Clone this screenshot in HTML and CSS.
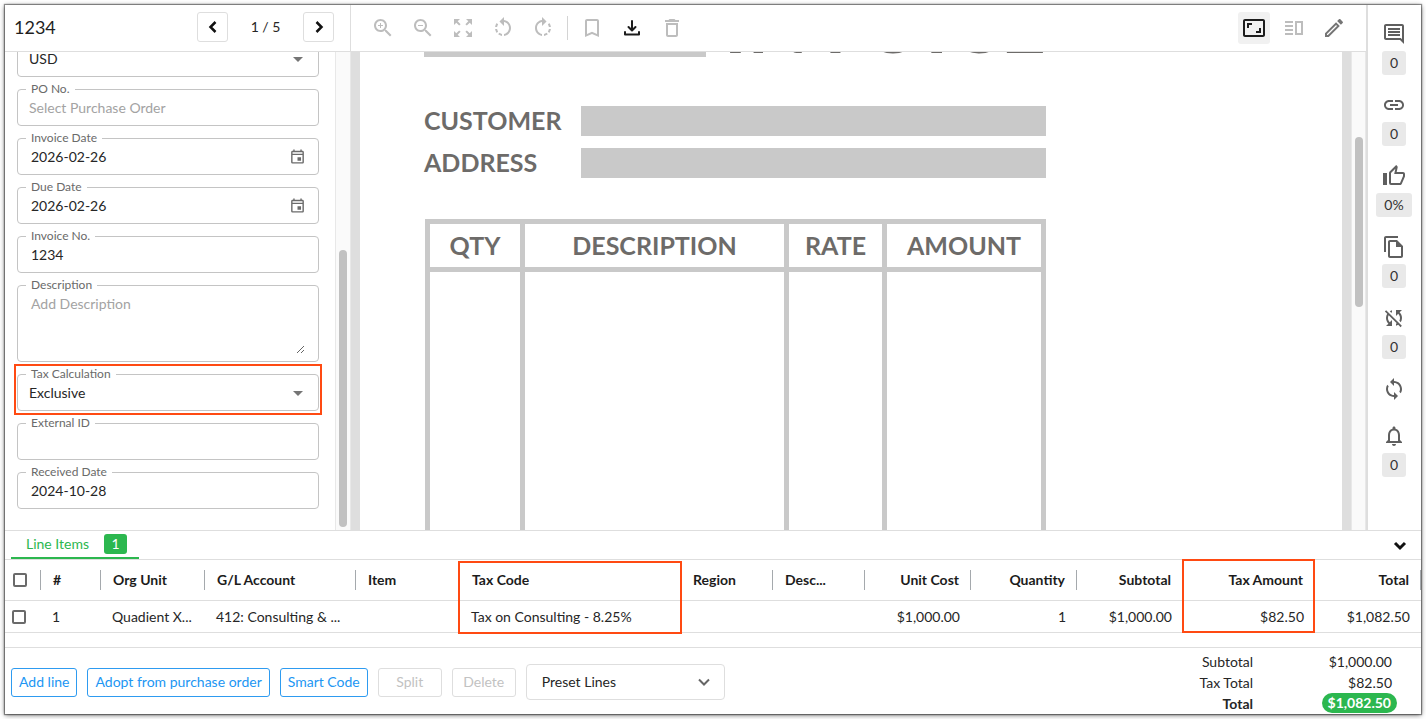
FILE: index.html
```html
<!DOCTYPE html>
<html lang="en">
<head>
<meta charset="utf-8">
<title>Invoice 1234</title>
<link rel="stylesheet" href="styles.css">
</head>
<body>
<div class="app">
  <div class="workspace">
    <section class="panel">
      <header class="bar panel-bar">
        <h1 class="title">1234</h1>
        <button class="step" aria-label="Previous"><svg class="icon" viewBox="0 0 24 24"><path class="chevron" d="M15 6l-6 6 6 6"/></svg></button>
        <span class="count">1 / 5</span>
        <button class="step" aria-label="Next"><svg class="icon" viewBox="0 0 24 24"><path class="chevron" d="M9 6l6 6-6 6"/></svg></button>
      </header>
      <div class="panel-body">
        <form class="fields">
          <div class="field">
            <select aria-label="Currency" class="tight"><option>USD</option></select>
            <svg class="icon drop" viewBox="0 0 24 24"><path d="M7 10l5 5 5-5z"/></svg>
          </div>
          <div class="field">
            <label for="po">PO No.</label>
            <input id="po" class="tight" type="text" placeholder="Select Purchase Order">
          </div>
          <div class="field">
            <label for="invdate">Invoice Date</label>
            <input id="invdate" type="text" value="2026-02-26">
            <svg class="calendar" viewBox="0 0 24 24"><path d="M19 4h-1V2h-2v2H8V2H6v2H5c-1.110 0-1.990.9-1.990 2L3 20a2 2 0 0 0 2 2h14c1.100 0 2-.9 2-2V6c0-1.100-.9-2-2-2zm0 16H5V10h14v10zM5 8V6h14v2H5zm7 5h5v5h-5v-5z"/></svg>
          </div>
          <div class="field">
            <label for="duedate">Due Date</label>
            <input id="duedate" type="text" value="2026-02-26">
            <svg class="calendar" viewBox="0 0 24 24"><path d="M19 4h-1V2h-2v2H8V2H6v2H5c-1.110 0-1.990.9-1.990 2L3 20a2 2 0 0 0 2 2h14c1.100 0 2-.9 2-2V6c0-1.100-.9-2-2-2zm0 16H5V10h14v10zM5 8V6h14v2H5zm7 5h5v5h-5v-5z"/></svg>
          </div>
          <div class="field">
            <label for="invno">Invoice No.</label>
            <input id="invno" type="text" value="1234">
          </div>
          <div class="field tall">
            <label for="desc">Description</label>
            <textarea id="desc" placeholder="Add Description"></textarea>
            <svg class="grip" viewBox="0 0 10 10"><path d="M1 8L8 1M5 8l3-3"/></svg>
          </div>
          <div class="field">
            <label for="tax">Tax Calculation</label>
            <select id="tax" class="tight"><option>Exclusive</option></select>
            <svg class="icon drop" viewBox="0 0 24 24"><path d="M7 10l5 5 5-5z"/></svg>
            <span class="mark mark-field"></span>
          </div>
          <div class="field">
            <label for="extid">External ID</label>
            <input id="extid" type="text">
          </div>
          <div class="field">
            <label for="received">Received Date</label>
            <input id="received" type="text" value="2024-10-28">
          </div>
        </form>
        <div class="track track-wide"><div class="thumb thumb-low"></div></div>
      </div>
    </section>

    <section class="viewer">
      <header class="bar viewer-bar">
        <button class="tool" aria-label="Zoom in"><svg class="icon" viewBox="0 0 24 24"><path d="M15.500 14h-.79l-.28-.27C15.410 12.590 16 11.110 16 9.500 16 5.910 13.090 3 9.500 3S3 5.910 3 9.500 5.910 16 9.500 16c1.610 0 3.090-.59 4.230-1.570l.27.28v.79l5 4.990L20.490 19l-4.990-5zm-6 0C7.010 14 5 11.990 5 9.500S7.010 5 9.500 5 14 7.010 14 9.500 11.990 14 9.500 14z"/><path d="M12 10h-2v2H9v-2H7V9h2V7h1v2h2v1z"/></svg></button>
        <button class="tool" aria-label="Zoom out"><svg class="icon" viewBox="0 0 24 24"><path d="M15.500 14h-.79l-.28-.27C15.410 12.590 16 11.110 16 9.500 16 5.910 13.090 3 9.500 3S3 5.910 3 9.500 5.910 16 9.500 16c1.610 0 3.090-.59 4.230-1.570l.27.28v.79l5 4.990L20.490 19l-4.990-5zm-6 0C7.010 14 5 11.990 5 9.500S7.010 5 9.500 5 14 7.010 14 9.500 11.990 14 9.500 14z"/><path d="M7 9h5v1H7z"/></svg></button>
        <button class="tool" aria-label="Fit"><svg class="icon" viewBox="0 0 24 24"><path d="M15 3l2.300 2.300-2.890 2.870 1.420 1.420L18.700 6.700 21 9V3zM3 9l2.300-2.300 2.870 2.890 1.420-1.420L6.700 5.300 9 3H3zm6 12l-2.300-2.300 2.890-2.870-1.420-1.420L5.300 17.300 3 15v6zm12-6l-2.300 2.300-2.870-2.890-1.420 1.420 2.890 2.870L15 21h6z"/></svg></button>
        <button class="tool" aria-label="Rotate left"><svg class="icon" viewBox="0 0 24 24"><path d="M7.110 8.530L5.700 7.110C4.800 8.270 4.240 9.610 4.070 11h2.020c.14-.87.49-1.720 1.020-2.470zM6.090 13H4.070c.17 1.390.72 2.730 1.620 3.890l1.410-1.420c-.52-.75-.87-1.590-1.010-2.470zm1.010 5.320c1.160.9 2.510 1.440 3.900 1.610V17.900c-.87-.15-1.710-.49-2.460-1.030L7.100 18.320zM13 4.070V1L8.450 5.550 13 10V6.090c2.840.48 5 2.940 5 5.910s-2.160 5.430-5 5.910v2.020c3.950-.49 7-3.850 7-7.930s-3.050-7.440-7-7.930z"/></svg></button>
        <button class="tool" aria-label="Rotate right"><svg class="icon" viewBox="0 0 24 24"><path transform="translate(24 0) scale(-1 1)" d="M7.110 8.530L5.700 7.110C4.800 8.270 4.240 9.610 4.070 11h2.020c.14-.87.49-1.720 1.020-2.470zM6.090 13H4.070c.17 1.390.72 2.730 1.620 3.890l1.410-1.420c-.52-.75-.87-1.590-1.010-2.470zm1.010 5.320c1.160.9 2.510 1.440 3.900 1.610V17.900c-.87-.15-1.710-.49-2.460-1.030L7.100 18.320zM13 4.070V1L8.450 5.550 13 10V6.090c2.840.48 5 2.940 5 5.910s-2.160 5.430-5 5.910v2.020c3.950-.49 7-3.850 7-7.930s-3.050-7.440-7-7.930z"/></svg></button>
        <span class="rule"></span>
        <button class="tool" aria-label="Bookmark"><svg class="icon" viewBox="0 0 24 24"><path d="M17 3H7c-1.100 0-1.990.9-1.990 2L5 21l7-3 7 3V5c0-1.100-.9-2-2-2zm0 15l-5-2.180L7 18V5h10v13z"/></svg></button>
        <button class="tool strong" aria-label="Download"><svg class="icon" viewBox="0 0 24 24"><path class="line" d="M12 5v9M8.500 11l3.500 3.500 3.500-3.500M5 16v2.500h14V16"/></svg></button>
        <button class="tool" aria-label="Delete page"><svg class="icon" viewBox="0 0 24 24"><path d="M6 19c0 1.100.9 2 2 2h8c1.100 0 2-.9 2-2V7H6v12zM8 9h8v10H8V9zm7.500-5l-1-1h-5l-1 1H5v2h14V4z"/></svg></button>
        <span class="spacer"></span>
        <button class="tool strong active" aria-label="Wide view"><svg class="icon" viewBox="0 0 24 24"><path d="M19 12h-2v3h-3v2h5v-5zM7 9h3V7H5v5h2V9zm14-6H3c-1.100 0-2 .9-2 2v14c0 1.100.9 2 2 2h18c1.100 0 2-.9 2-2V5c0-1.100-.9-2-2-2zm0 16.010H3V4.990h18v14.020z"/></svg></button>
        <button class="tool" aria-label="Split view"><svg class="icon" viewBox="0 0 24 24"><path d="M3 15h8v-2H3v2zm0 4h8v-2H3v2zm0-8h8V9H3v2zm0-6v2h8V5H3zm10 0h8v14h-8V5zm2 2v10h4V7h-4z"/></svg></button>
        <button class="tool medium" aria-label="Edit"><svg class="icon" viewBox="0 0 24 24"><path d="M14.060 9L15 9.940 5.920 19H5v-.92L14.060 9M17.660 3c-.25 0-.51.1-.7.29l-1.830 1.830 3.750 3.750 1.830-1.830c.39-.39.39-1.040 0-1.410l-2.340-2.340c-.2-.2-.45-.29-.71-.29M14.060 6.190L3 17.250V21h3.750L17.810 9.940 14.060 6.190z"/></svg></button>
      </header>
      <div class="viewer-body">
        <div class="page">
          <div class="invoice">
            <div class="invoice-head"><div class="blank-short"></div><div class="invoice-title">INVOICE</div></div>
            <div class="party">
              <span>CUSTOMER</span><div class="blank"></div>
              <span>ADDRESS</span><div class="blank"></div>
            </div>
            <table class="sheet">
              <colgroup><col class="s-qty"><col><col class="s-rate"><col class="s-amount"></colgroup>
              <thead><tr><th>QTY</th><th>DESCRIPTION</th><th>RATE</th><th>AMOUNT</th></tr></thead>
              <tbody><tr><td></td><td></td><td></td><td></td></tr></tbody>
            </table>
          </div>
        </div>
        <div class="track"><div class="thumb thumb-mid"></div></div>
      </div>
    </section>

    <nav class="rail">
      <button class="rail-item" aria-label="Comments"><svg class="icon" viewBox="0 0 24 24"><path d="M21.990 4c0-1.100-.89-2-1.990-2H4c-1.100 0-2 .9-2 2v12c0 1.100.9 2 2 2h14l4 4-.01-18zM20 4v13.170L18.830 16H4V4h16zM6 12h12v2H6zm0-3h12v2H6zm0-3h12v2H6z"/></svg><span class="chip">0</span></button>
      <button class="rail-item" aria-label="Links"><svg class="icon" viewBox="0 0 24 24"><path d="M3.900 12c0-1.710 1.390-3.100 3.100-3.100h4V7H7c-2.760 0-5 2.240-5 5s2.240 5 5 5h4v-1.900H7c-1.710 0-3.100-1.390-3.100-3.100zM8 13h8v-2H8v2zm9-6h-4v1.900h4c1.710 0 3.100 1.390 3.100 3.100s-1.390 3.100-3.100 3.100h-4V17h4c2.760 0 5-2.240 5-5s-2.240-5-5-5z"/></svg><span class="chip">0</span></button>
      <button class="rail-item" aria-label="Approvals"><svg class="icon" viewBox="0 0 24 24"><path d="M5 9v12H1V9h4m4 12a2 2 0 0 1-2-2V9c0-.55.22-1.050.59-1.410L14.170 1l1.060 1.060c.27.27.44.64.44 1.050l-.03.32L14.690 8H21c1.110 0 2 .9 2 2v2c0 .26-.05.5-.14.73l-3.020 7.050C19.540 20.500 18.830 21 18 21H9m0-2h9.030L21 12v-2h-8.790l1.130-5.320L9 9.030V19z"/></svg><span class="chip">0%</span></button>
      <button class="rail-item" aria-label="Duplicates"><svg class="icon" viewBox="0 0 24 24"><path d="M16 1H4c-1.100 0-2 .9-2 2v14h2V3h12V1zm-1 4H8c-1.100 0-1.990.9-1.990 2L6 21c0 1.100.89 2 1.990 2H19c1.100 0 2-.9 2-2V11l-6-6zM8 21V7h6v5h5v9H8z"/></svg><span class="chip">0</span></button>
      <button class="rail-item" aria-label="Sync errors"><svg class="icon" viewBox="0 0 24 24"><path d="M10 6.350V4.260c-.8.21-1.550.54-2.230.96l1.460 1.460c.25-.12.5-.24.77-.33zm-7.140-.94l2.360 2.360C4.450 8.990 4 10.440 4 12c0 2.210.91 4.200 2.360 5.640L4 20h6v-6l-2.240 2.240C6.680 15.150 6 13.660 6 12c0-1 .25-1.940.68-2.770l8.080 8.080c-.25.13-.5.25-.77.34v2.090c.8-.21 1.550-.54 2.230-.96l2.360 2.360 1.270-1.270L4.140 4.140 2.860 5.410zM20 4h-6v6l2.240-2.240C17.320 8.850 18 10.340 18 12c0 1-.25 1.940-.68 2.770l1.460 1.460C19.550 15.010 20 13.560 20 12c0-2.210-.91-4.200-2.360-5.640L20 4z"/></svg><span class="chip">0</span></button>
      <button class="rail-item" aria-label="Sync"><svg class="icon" viewBox="0 0 24 24"><path d="M12 4V1L8 5l4 4V6c3.310 0 6 2.690 6 6 0 1.010-.25 1.970-.7 2.800l1.460 1.460C19.540 15.030 20 13.570 20 12c0-4.420-3.580-8-8-8zm0 14c-3.310 0-6-2.690-6-6 0-1.010.25-1.970.7-2.800L5.240 7.740C4.460 8.970 4 10.430 4 12c0 4.420 3.580 8 8 8v3l4-4-4-4v3z"/></svg></button>
      <button class="rail-item" aria-label="Notifications"><svg class="icon" viewBox="0 0 24 24"><path d="M12 22c1.100 0 2-.9 2-2h-4c0 1.100.9 2 2 2zm6-6v-5c0-3.070-1.630-5.640-4.500-6.320V4c0-.83-.67-1.500-1.500-1.500s-1.500.67-1.500 1.500v.68C7.640 5.360 6 7.920 6 11v5l-2 2v1h16v-1l-2-2zm-2 1H8v-6c0-2.480 1.510-4.500 4-4.500s4 2.020 4 4.500v6z"/></svg><span class="chip">0</span></button>
    </nav>
  </div>

  <section class="lines">
    <div class="tabs">
      <button class="tab">Line Items<span class="tab-count">1</span></button>
      <span class="spacer"></span>
      <button class="collapse" aria-label="Collapse"><svg class="icon" viewBox="0 0 24 24"><path class="chevron" d="M7 10l5 5 5-5"/></svg></button>
    </div>
    <table class="grid">
      <colgroup>
        <col class="c-check"><col class="c-num"><col class="c-name"><col class="c-account"><col class="c-name"><col>
        <col class="c-short"><col class="c-short"><col class="c-money"><col class="c-money"><col class="c-money"><col class="c-tax"><col class="c-money">
      </colgroup>
      <thead>
        <tr>
          <th class="check"><input type="checkbox" aria-label="Select all lines"></th>
          <th>#</th><th>Org Unit</th><th>G/L Account</th><th class="bare">Item</th>
          <th class="bare">Tax Code<span class="mark mark-code"></span></th>
          <th>Region</th><th>Desc...</th>
          <th class="num">Unit Cost</th><th class="num">Quantity</th><th class="num bare">Subtotal</th>
          <th class="num bare">Tax Amount<span class="mark mark-amount"></span></th>
          <th class="num">Total</th>
        </tr>
      </thead>
      <tbody>
        <tr>
          <td class="check"><input type="checkbox" aria-label="Select line 1"></td>
          <td>1</td><td>Quadient X...</td><td>412: Consulting &amp; ...</td><td></td>
          <td>Tax on Consulting - 8.25%</td><td></td><td></td>
          <td class="num">$1,000.00</td><td class="num">1</td><td class="num">$1,000.00</td>
          <td class="num">$82.50</td><td class="num">$1,082.50</td>
        </tr>
      </tbody>
    </table>
    <footer class="actions">
      <button class="btn">Add line</button>
      <button class="btn">Adopt from purchase order</button>
      <button class="btn">Smart Code</button>
      <button class="btn" disabled>Split</button>
      <button class="btn" disabled>Delete</button>
      <div class="preset">
        <select aria-label="Preset lines"><option>Preset Lines</option></select>
        <svg class="icon preset-arrow" viewBox="0 0 24 24"><path class="chevron" d="M7 9.500l5 5 5-5"/></svg>
      </div>
      <span class="spacer"></span>
      <dl class="totals">
        <dt>Subtotal</dt><dd>$1,000.00</dd>
        <dt>Tax Total</dt><dd>$82.50</dd>
        <dt class="sum">Total</dt><dd class="sum"><span class="pill">$1,082.50</span></dd>
      </dl>
    </footer>
  </section>
</div>
</body>
</html>
```

FILE: styles.css
```css
* { box-sizing: border-box; }

body {
  margin: 0;
  min-height: 100vh;
  display: flex;
  padding: 5px 5px 5px;
  background: #fff;
  color: #262626;
  font-family: Lato, "Liberation Sans", sans-serif;
  font-size: 15px;
  line-height: 20px;
}

button, input, select, textarea { font: inherit; color: inherit; margin: 0; }
button { background: none; border: 0; padding: 0; }

.app {
  flex: 1;
  min-width: 0;
  display: flex;
  flex-direction: column;
  background: #fff;
  box-shadow: 0 0 1px 1px rgba(0, 0, 0, .4), 0 1px 5px rgba(0, 0, 0, .6);
}

.icon { width: 24px; height: 24px; display: block; fill: currentColor; }
.chevron, .line { fill: none; stroke: currentColor; stroke-width: 2; }
.chevron { stroke-width: 3; }
.line { stroke-linecap: round; stroke-linejoin: round; }
.spacer { flex: 1; }

.workspace { flex: 1; display: flex; min-height: 0; }

.bar {
  height: 47px;
  flex: none;
  display: flex;
  align-items: center;
  border-bottom: 1px solid #dedede;
}

/* Left panel */
.panel { width: 346px; flex: none; display: flex; flex-direction: column; }
.panel-bar { padding: 0 16px 2px 9px; border-right: 1px solid #dedede; }
.title { flex: 1; margin: 0; font-size: 18px; font-weight: 400; color: #1f1f1f; }
.step {
  width: 31px;
  height: 30px;
  display: flex;
  align-items: center;
  justify-content: center;
  border: 1px solid #dedede;
  border-radius: 3px;
  color: #111;
}
.step .icon { width: 20px; height: 20px; flex: none; }
.count { width: 75px; text-align: center; font-size: 14px; }

.panel-body { flex: 1 1 0; min-height: 0; overflow: hidden; display: flex; }
.fields {
  flex: 1;
  display: flex;
  flex-direction: column;
  justify-content: flex-end;
  gap: 12px;
  padding: 0 16px 21px 12px;
}
.field {
  position: relative;
  flex: none;
  height: 37px;
  display: flex;
  border: 1px solid #c4c4c4;
  border-radius: 4px;
}
.field.tall { height: 77px; }
.field label {
  position: absolute;
  left: 8px;
  top: -11px;
  padding: 0 5px;
  background: #fff;
  color: #6a6a6a;
  font-size: 12px;
}
.field input, .field select, .field textarea {
  flex: 1;
  min-width: 0;
  border: 0;
  outline: 0;
  background: transparent;
  padding: 2px 13px 0;
  font-size: 14px;
  appearance: none;
}
.field textarea { padding: 8px 13px; resize: none; }
.field .tight { padding-left: 11px; }
.field ::placeholder { color: #a3a3a3; opacity: 1; }
.drop { position: absolute; right: 8px; top: 6px; color: #757575; pointer-events: none; }
.calendar { width: 17px; height: 17px; flex: none; align-self: center; margin-right: 12px; fill: #6b6b6b; }
.grip { position: absolute; right: 12px; bottom: 6px; width: 10px; height: 10px; fill: none; stroke: #666; }

.track { width: 15px; flex: none; padding: 0 3px; background: #fafafa; border: solid #e8e8e8; border-width: 0 1px; }
.track-wide { width: 16px; }
.thumb { width: 8px; border-radius: 4px; background: #c1c1c1; }
.thumb-low { height: 277px; margin-top: 198px; }
.thumb-mid { height: 170px; margin-top: 85px; }

.mark { position: absolute; z-index: 1; border: 2px solid #ff4a12; pointer-events: none; }
.mark-field { inset: -11px -4px -5px -4px; }

/* Document viewer */
.viewer { flex: 1; min-width: 0; display: flex; flex-direction: column; }
.viewer-bar { padding: 0 12px; }
.tool { width: 40px; height: 32px; display: flex; align-items: center; justify-content: center; color: #bdbdbd; }
.strong { color: #1c1c1c; }
.medium { color: #757575; }
.active { width: 32px; margin: 0 4px; background: #f1f1f1; border-radius: 3px; }
.rule { width: 1px; height: 24px; margin: 0 4px; background: #d4d4d4; }
.viewer-body { flex: 1 1 0; min-height: 0; display: flex; overflow: hidden; background: #dedede; padding-left: 9px; }
.page { flex: 1; min-width: 0; margin-right: 9px; padding-left: 64px; background: #fff; overflow: hidden; }
.invoice { width: 622px; color: #6d6b69; font-weight: 700; font-size: 25px; }
.invoice-head { height: 10px; display: flex; align-items: flex-end; justify-content: space-between; }
.blank-short { width: 282px; height: 30px; margin-bottom: 5px; background: #c9c9c9; }
.invoice-title { font-size: 79px; line-height: 79px; }
.party { display: grid; grid-template-columns: 157px 1fr; gap: 12px 0; margin-top: 44px; line-height: 28px; }
.blank { height: 30px; background: #c9c9c9; }
.sheet {
  width: 621px;
  margin: 41px 0 0 1px;
  table-layout: fixed;
  border-collapse: separate;
  border-spacing: 5px;
  background: #c9c9c9;
}
.sheet th, .sheet td { padding: 0; background: #fff; }
.sheet th { height: 43px; padding-bottom: 2px; line-height: 30px; }
.sheet td { height: 400px; }
.s-qty { width: 90px; }
.s-rate { width: 93px; }
.s-amount { width: 154px; }

/* Right rail */
.rail {
  width: 55px;
  flex: none;
  display: flex;
  flex-direction: column;
  align-items: center;
  gap: 18px;
  padding: 17px 1px 0 0;
  border-left: 2px solid #dedede;
  color: #5f5f5f;
}
.rail-item { display: flex; flex-direction: column; align-items: center; }
.rail-item .icon { margin-bottom: 5px; }
.chip {
  min-width: 24px;
  height: 24px;
  padding: 0 8px;
  border-radius: 3px;
  background: #e9e9e9;
  color: #333;
  font-size: 14px;
  line-height: 24px;
}

/* Line items */
.lines { border-top: 1px solid #dedede; }
.tabs { display: flex; height: 29px; padding: 0 9px 0 6px; border-bottom: 1px solid #dedede; }
.tab {
  display: flex;
  align-items: center;
  gap: 15px;
  height: 28px;
  padding: 0 12px 0 15px;
  border-bottom: 2px solid #2cb74f;
  color: #2cb74f;
  font-size: 14px;
}
.tab-count { width: 23px; height: 20px; border-radius: 3px; background: #2cb74f; color: #fff; }
.collapse { color: #111; align-self: center; }

.grid { width: 100%; table-layout: fixed; border-collapse: collapse; font-size: 14px; margin-bottom: 14px; }
.grid th, .grid td { padding: 0 12px; border-bottom: 1px solid #dedede; text-align: left; white-space: nowrap; }
.grid th { position: relative; height: 41px; color: #1c1c1c; font-weight: 700; }
.grid td { height: 32px; padding: 0 11px; }
.grid .num { text-align: right; }
.grid th::after { content: ""; position: absolute; right: 0; top: 10px; width: 1px; height: 20px; background: #a5a9ad; }
.grid th.bare::after { content: none; }
.grid th.check { padding: 0 8px; }
.grid td.check { padding: 0 7px; }
.grid input {
  display: block;
  appearance: none;
  width: 14px;
  height: 14px;
  border: 2px solid #6a6a6a;
  border-radius: 2px;
  background: #fff;
}
.c-check { width: 36px; }
.c-num { width: 60px; }
.c-name { width: 104px; }
.c-account { width: 151px; }
.c-short { width: 92px; }
.c-money { width: 106px; }
.c-tax { width: 132px; }
.mark-code { inset: 1px -1px auto -2px; height: 73px; }
.mark-amount { inset: -1px 0 auto -1px; height: 74px; }

.actions {
  display: flex;
  align-items: center;
  gap: 10px;
  height: 67px;
  padding: 2px 24px 0 6px;
  border-top: 1px solid #dedede;
}
.btn {
  height: 29px;
  padding: 0 7px;
  min-width: 64px;
  border: 1px solid #2e9bf0;
  border-radius: 3px;
  color: #2196f3;
  font-size: 14px;
}
.btn:disabled { border-color: #dedede; color: #c2c2c2; }
.preset { position: relative; display: flex; width: 199px; }
.preset select {
  flex: 1;
  height: 36px;
  padding: 0 15px;
  border: 1px solid #dedede;
  border-radius: 4px;
  background: #fff;
  font-size: 14px;
  appearance: none;
}
.preset-arrow { position: absolute; right: 9px; top: 6px; color: #666; pointer-events: none; }
.preset-arrow .chevron { stroke-width: 2; }
.totals { display: grid; grid-template-columns: auto 144px; margin: 0; line-height: 21px; font-size: 14px; text-align: right; }
.totals dd { height: 21px; margin: 0; padding-right: 5px; }
.totals .sum { font-weight: 700; }
.totals dd.sum { padding: 0; line-height: 20px; }
.pill { display: inline-block; padding: 0 6px; border-radius: 10px; background: #2cb74f; color: #fff; line-height: 20px; }
```
